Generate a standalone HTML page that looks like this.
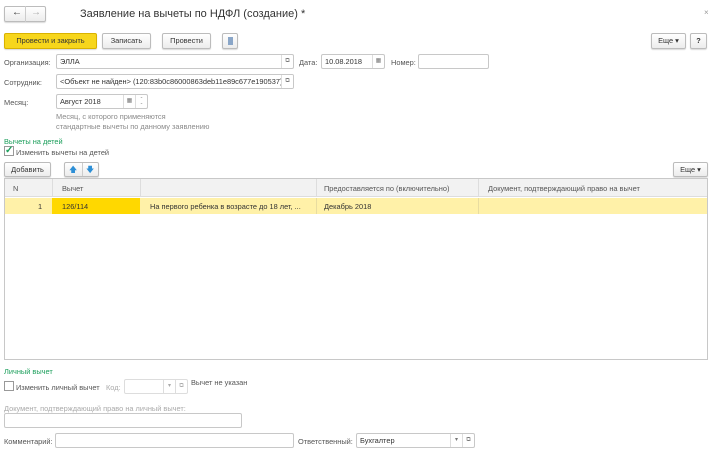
<!DOCTYPE html>
<html><head><meta charset="utf-8"><style>
*{box-sizing:border-box;margin:0;padding:0}
body{width:714px;height:455px;background:#fff;font-family:"Liberation Sans",Arial,sans-serif;font-size:7.4px;color:#444;position:relative;overflow:hidden}
.a{position:absolute;white-space:nowrap}
.btn{position:absolute;border:1px solid #bcbcbc;border-radius:2px;background:linear-gradient(#fff,#ececec);box-shadow:0 1px 1px rgba(0,0,0,.15);text-align:center;color:#333;font-size:7.4px}
.in{position:absolute;border:1px solid #c8c8c8;border-radius:2px;background:#fff;color:#333;padding-left:3px;overflow:hidden;white-space:nowrap}
.sb{position:absolute;top:0;bottom:0;border-left:1px solid #ddd;text-align:center;color:#777;font-size:6px}
.g{color:#1a9e5a}
.l{color:#555}
.h{color:#999}
</style></head><body>
<div class="btn" style="left:4px;top:6px;width:42px;height:16px"></div>
<div class="a" style="left:12px;top:7px;font-size:10px;color:#333">&#8592;</div>
<div class="a" style="left:25px;top:6px;width:1px;height:16px;background:#ccc"></div>
<div class="a" style="left:31px;top:7px;font-size:10px;color:#aaa">&#8594;</div>
<div class="a" style="left:80px;top:8px;font-size:11px;color:#333">Заявление на вычеты по НДФЛ (создание) *</div>
<div class="a" style="left:704px;top:8px;font-size:8px;color:#999">×</div>

<div class="btn" style="left:4px;top:33px;width:93px;height:16px;line-height:14px;background:#f7d61c;border-color:#d9b200;color:#333">Провести и закрыть</div>
<div class="btn" style="left:102px;top:33px;width:49px;height:16px;line-height:14px">Записать</div>
<div class="btn" style="left:162px;top:33px;width:49px;height:16px;line-height:14px">Провести</div>
<div class="btn" style="left:222px;top:33px;width:16px;height:16px"><div style="width:5px;height:8px;background:#8aa6c8;margin:3px auto"></div></div>
<div class="btn" style="left:651px;top:33px;width:35px;height:16px;line-height:14px">Еще ▾</div>
<div class="btn" style="left:690px;top:33px;width:17px;height:16px;line-height:14px;font-weight:bold">?</div>

<div class="a l" style="left:4px;top:58px">Организация:</div>
<div class="in" style="left:56px;top:54px;width:238px;height:15px;line-height:13px">ЭЛЛА<div class="sb" style="right:0;width:12px">⧉</div></div>
<div class="a l" style="left:299px;top:58px">Дата:</div>
<div class="in" style="left:321px;top:54px;width:64px;height:15px;line-height:13px">10.08.2018<div class="sb" style="right:0;width:12px">▦</div></div>
<div class="a l" style="left:391px;top:58px">Номер:</div>
<div class="in" style="left:418px;top:54px;width:71px;height:15px"></div>

<div class="a l" style="left:4px;top:78px">Сотрудник:</div>
<div class="in" style="left:56px;top:74px;width:238px;height:15px;line-height:13px;padding-right:12px">&lt;Объект не найден&gt; (120:83b0c86000863deb11e89c677e190537)<div class="sb" style="right:0;width:12px;background:#fff">⧉</div></div>

<div class="a l" style="left:4px;top:98px">Месяц:</div>
<div class="in" style="left:56px;top:94px;width:92px;height:15px;line-height:13px">Август 2018<div class="sb" style="right:12px;width:12px">▦</div><div class="sb" style="right:0;width:12px;line-height:6px">-<br>-</div></div>
<div class="a" style="left:56px;top:112px;color:#8a8a8a">Месяц, с которого применяются</div>
<div class="a" style="left:56px;top:122px;color:#8a8a8a">стандартные вычеты по данному заявлению</div>

<div class="a g" style="left:4px;top:137px">Вычеты на детей</div>
<div class="a" style="left:4px;top:146px;width:10px;height:10px;border:1px solid #999;background:#fff;color:#1a9e5a;font-size:10px;line-height:8px;font-weight:bold">✓</div>
<div class="a l" style="left:16px;top:148px">Изменить вычеты на детей</div>

<div class="btn" style="left:4px;top:162px;width:47px;height:15px;line-height:13px">Добавить</div>
<div class="btn" style="left:64px;top:162px;width:35px;height:15px;line-height:13px;color:#2d8fd6;font-size:8px"><span style="position:absolute;left:4px">🡅</span><span style="position:absolute;left:17px;top:0;width:1px;height:13px;background:#ccc"></span><span style="position:absolute;left:21px">🡇</span></div>
<div class="btn" style="left:673px;top:162px;width:35px;height:15px;line-height:13px">Еще ▾</div>

<div class="a" style="left:4px;top:178px;width:704px;height:182px;border:1px solid #c8c8c8;background:#fff"></div>
<div class="a" style="left:5px;top:179px;width:702px;height:18px;background:#f2f2f2;border-bottom:1px solid #ddd"></div>
<div class="a" style="left:52px;top:179px;width:1px;height:18px;background:#ddd"></div>
<div class="a" style="left:140px;top:179px;width:1px;height:18px;background:#ddd"></div>
<div class="a" style="left:316px;top:179px;width:1px;height:18px;background:#ddd"></div>
<div class="a" style="left:478px;top:179px;width:1px;height:18px;background:#ddd"></div>
<div class="a l" style="left:13px;top:184px">N</div>
<div class="a l" style="left:62px;top:184px">Вычет</div>
<div class="a l" style="left:324px;top:184px">Предоставляется по (включительно)</div>
<div class="a l" style="left:488px;top:184px">Документ, подтверждающий право на вычет</div>
<div class="a" style="left:5px;top:198px;width:702px;height:16px;background:#fff1a8"></div>
<div class="a" style="left:52px;top:198px;width:88px;height:16px;background:#ffd800"></div>
<div class="a" style="left:316px;top:198px;width:1px;height:16px;background:#e8dca0"></div>
<div class="a" style="left:478px;top:198px;width:1px;height:16px;background:#e8dca0"></div>
<div class="a" style="left:38px;top:202px;color:#333">1</div>
<div class="a" style="left:62px;top:202px;color:#333">126/114</div>
<div class="a" style="left:150px;top:202px;color:#333">На первого ребенка в возрасте до 18 лет, ...</div>
<div class="a" style="left:324px;top:202px;color:#333">Декабрь 2018</div>

<div class="a g" style="left:4px;top:367px">Личный вычет</div>
<div class="a" style="left:4px;top:381px;width:10px;height:10px;border:1px solid #999;background:#fff"></div>
<div class="a l" style="left:16px;top:383px">Изменить личный вычет</div>
<div class="a" style="left:106px;top:383px;color:#aaa">Код:</div>
<div class="in" style="left:124px;top:379px;width:64px;height:15px;border-color:#ddd"><div class="sb" style="right:12px;width:12px;line-height:13px;color:#aaa">▾</div><div class="sb" style="right:0;width:12px;line-height:13px;color:#aaa">⧉</div></div>
<div class="a l" style="left:191px;top:378px">Вычет не указан</div>
<div class="a" style="left:4px;top:404px;color:#aaa">Документ, подтверждающий право на личный вычет:</div>
<div class="in" style="left:4px;top:413px;width:238px;height:15px"></div>

<div class="a l" style="left:4px;top:437px">Комментарий:</div>
<div class="in" style="left:55px;top:433px;width:239px;height:15px"></div>
<div class="a l" style="left:298px;top:437px">Ответственный:</div>
<div class="in" style="left:356px;top:433px;width:119px;height:15px;line-height:13px">Бухгалтер<div class="sb" style="right:12px;width:12px">▾</div><div class="sb" style="right:0;width:12px">⧉</div></div>
</body></html>
